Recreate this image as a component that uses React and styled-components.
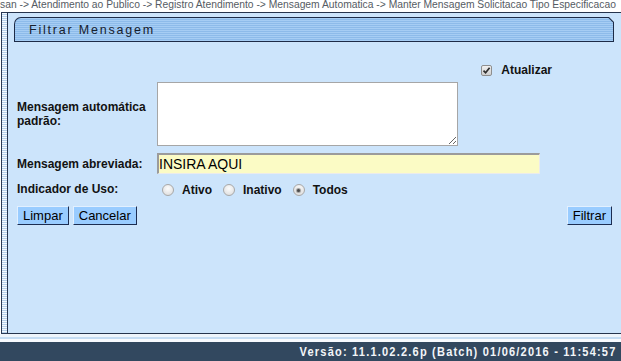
import React from "react";
import styled, { createGlobalStyle } from "styled-components";

const GlobalStyle = createGlobalStyle`
  html, body { margin: 0; padding: 0; background: #ffffff; }
  body { font-family: "Liberation Sans", Arial, sans-serif; overflow: hidden; }
  #root { width: 621px; height: 361px; }
`;

const Page = styled.div`
  width: 621px;
  height: 361px;
  display: flex;
  flex-direction: column;
  overflow: hidden;
  background: #ffffff;
`;

const Breadcrumb = styled.div`
  height: 12px;
  flex-shrink: 0;
  display: flex;
  overflow: hidden;
  white-space: nowrap;
  padding-top: 1px;
  box-sizing: border-box;
  font-family: "Liberation Sans", Arial, sans-serif;
  font-size: 10.3px;
  line-height: 8px;
  color: #555b63;
`;

const Crumbs = styled.span`
  flex-shrink: 0;
`;

const Body = styled.div`
  height: 322px;
  flex-shrink: 0;
  display: flex;
`;

const SideStrip = styled.div`
  width: 6px;
  margin-left: 1px;
  box-sizing: border-box;
  border: 1px solid #2a3954;
  border-right: none;
  background: repeating-linear-gradient(to bottom, #f4f9ff 0 1px, #b5d0ea 1px 2px);
`;

const Panel = styled.div`
  flex: 1;
  display: flex;
  flex-direction: column;
  border: 1px solid #26344d;
  border-right: none;
  background: #cce4fb;
  padding: 4px 7px 0 6px;
`;

const HeaderFrame = styled.div`
  padding: 1px;
  background: #1d2b47;
  border-top-left-radius: 7px;
  clip-path: polygon(0 0, calc(100% - 5px) 0, 100% 5px, 100% 100%, 0 100%);
`;

const HeaderFill = styled.div`
  height: 23px;
  border-top-left-radius: 6px;
  clip-path: polygon(0 0, calc(100% - 4.6px) 0, 100% 4.6px, 100% 100%, 0 100%);
  background: repeating-linear-gradient(to bottom, #a6cdf4 0 1px, #8dbbea 1px 2px);
  padding-left: 14px;
  display: flex;
  align-items: center;
`;

const HeaderTitle = styled.span`
  font-family: "Liberation Sans", Arial, sans-serif;
  font-size: 12.5px;
  letter-spacing: 1.8px;
  color: #16202e;
`;

const Form = styled.div`
  display: flex;
  flex-direction: column;
  padding: 0 2px 0 3px;
`;

const TopRow = styled.div`
  margin-top: 21px;
  height: 14px;
  display: flex;
  justify-content: flex-end;
  align-items: center;
  padding-right: 60px;
  gap: 9px;
`;

const CheckBox = styled.span`
  width: 11px;
  height: 11px;
  box-sizing: border-box;
  border: 1px solid #8e8e8e;
  border-radius: 2px;
  background: linear-gradient(to bottom, #f0f0f0, #cfcfcf);
  display: flex;
  align-items: center;
  justify-content: center;
`;

const FieldRow = styled.div`
  display: grid;
  grid-template-columns: 140px auto;
  align-items: center;
  margin-top: ${(p) => p.$gap}px;
`;

const Label = styled.div`
  font-family: "Liberation Sans", Arial, sans-serif;
  font-weight: bold;
  font-size: 12px;
  line-height: 14px;
  color: #121212;
`;

const TextArea = styled.textarea`
  width: 301px;
  height: 64px;
  box-sizing: border-box;
  margin: 0;
  border: 1px solid #a6a6a6;
  background: #ffffff;
  display: block;
`;

const TextInput = styled.input`
  width: 383px;
  height: 21px;
  box-sizing: border-box;
  margin: 0;
  padding: 0;
  border-top: 2px solid #9b9b9b;
  border-left: 2px solid #9b9b9b;
  border-right: 1px solid #ebebeb;
  border-bottom: 1px solid #ebebeb;
  background: #fbfbc5;
  font-family: "Liberation Sans", Arial, sans-serif;
  font-size: 14px;
  color: #000000;
  outline: none;
`;

const RadioGroup = styled.div`
  display: flex;
  align-items: center;
  padding-left: 5px;
  padding-top: 3px;
`;

const RadioItem = styled.label`
  display: flex;
  align-items: center;
  gap: 8px;
  margin-right: 11px;
  font-family: "Liberation Sans", Arial, sans-serif;
  font-weight: bold;
  font-size: 12px;
  color: #121212;
`;

const RadioDot = styled.span`
  width: 12px;
  height: 12px;
  box-sizing: border-box;
  border-radius: 50%;
  border: 1px solid #a8a8a8;
  background: radial-gradient(circle at 50% 35%, #fcfcfc, #d9d9d9);
  display: flex;
  align-items: center;
  justify-content: center;
  &::after {
    content: "";
    width: 3px;
    height: 3px;
    border-radius: 50%;
    background: ${(p) => (p.$checked ? "#4a4a4a" : "transparent")};
    box-shadow: ${(p) => (p.$checked ? "0 0 1px 1px #9a9a9a" : "none")};
  }
`;

const ButtonRow = styled.div`
  margin-top: 9px;
  display: flex;
  align-items: center;
`;

const ButtonGroup = styled.div`
  display: flex;
  gap: 4px;
`;

const Button = styled.button`
  height: 19px;
  margin: 0;
  padding: 0 5px;
  box-sizing: border-box;
  background: #99ccff;
  border: 1px solid;
  border-color: #e2f0ff #1c2c50 #1c2c50 #e2f0ff;
  font-family: "Liberation Sans", Arial, sans-serif;
  font-size: 13px;
  line-height: 17px;
  color: #000000;
  margin-left: ${(p) => (p.$push ? "auto" : "0")};
`;

const Band = styled.div`
  height: 8px;
  flex-shrink: 0;
  background: linear-gradient(
    to bottom,
    #eef5fc 0 3px,
    #c4dcf3 3px 5px,
    #f8fbff 5px 8px
  );
`;

const Footer = styled.div`
  flex: 1;
  background: #32485f;
  display: flex;
  justify-content: flex-end;
  align-items: center;
  padding-right: 4px;
`;

const FooterText = styled.span`
  font-family: "Liberation Sans", Arial, sans-serif;
  font-weight: bold;
  font-size: 12px;
  letter-spacing: 1.3px;
  color: #f2f5f8;
  white-space: nowrap;
  transform: scaleX(0.92);
  transform-origin: right center;
`;

function CheckIcon() {
  return (
    <svg width="9" height="9" viewBox="0 0 9 9">
      <path d="M1.5 4.6 L3.6 6.8 L7.6 1.8" fill="none" stroke="#2e2e2e" strokeWidth="1.7" />
    </svg>
  );
}

function Radio({ checked, children }) {
  return (
    <RadioItem>
      <RadioDot $checked={checked} />
      {children}
    </RadioItem>
  );
}

export default function App() {
  return (
    <>
      <GlobalStyle />
      <Page>
        <Breadcrumb>
          <Crumbs>
            san -&gt; Atendimento ao Publico -&gt; Registro Atendimento -&gt; Mensagem Automatica -&gt; Manter Mensagem Solicitacao Tipo Especificacao
          </Crumbs>
        </Breadcrumb>
        <Body>
          <SideStrip />
          <Panel>
            <HeaderFrame>
              <HeaderFill>
                <HeaderTitle>Filtrar Mensagem</HeaderTitle>
              </HeaderFill>
            </HeaderFrame>
            <Form>
              <TopRow>
                <CheckBox>
                  <CheckIcon />
                </CheckBox>
                <Label>Atualizar</Label>
              </TopRow>
              <FieldRow $gap={5}>
                <Label>Mensagem automática padrão:</Label>
                <TextArea />
              </FieldRow>
              <FieldRow $gap={7}>
                <Label>Mensagem abreviada:</Label>
                <TextInput defaultValue="INSIRA AQUI" />
              </FieldRow>
              <FieldRow $gap={6}>
                <Label>Indicador de Uso:</Label>
                <RadioGroup>
                  <Radio>Ativo</Radio>
                  <Radio>Inativo</Radio>
                  <Radio checked>Todos</Radio>
                </RadioGroup>
              </FieldRow>
              <ButtonRow>
                <ButtonGroup>
                  <Button>Limpar</Button>
                  <Button>Cancelar</Button>
                </ButtonGroup>
                <Button $push>Filtrar</Button>
              </ButtonRow>
            </Form>
          </Panel>
        </Body>
        <Band />
        <Footer>
          <FooterText>Versão: 11.1.02.2.6p (Batch) 01/06/2016 - 11:54:57</FooterText>
        </Footer>
      </Page>
    </>
  );
}
